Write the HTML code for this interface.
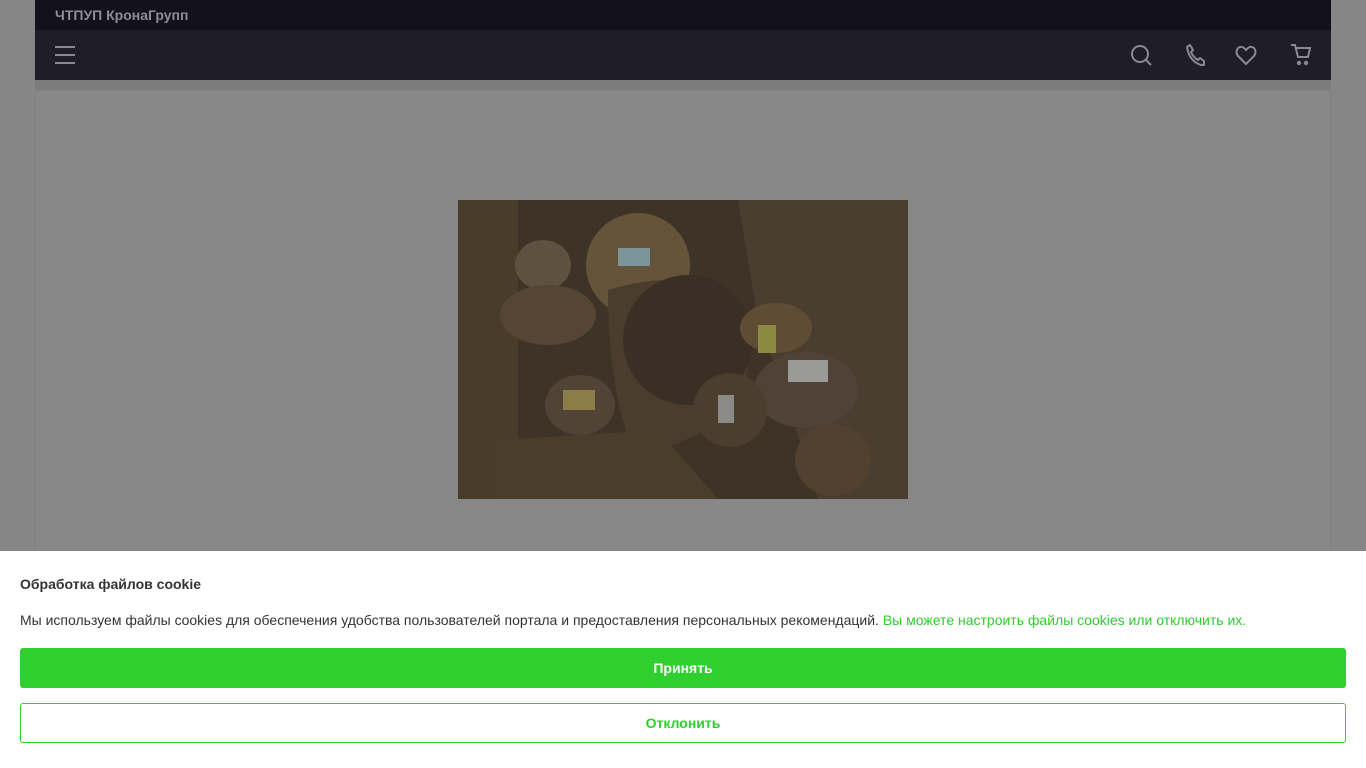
<!DOCTYPE html>
<html><head><meta charset="utf-8"><style>
*{margin:0;padding:0;box-sizing:border-box}
body{width:1366px;height:768px;overflow:hidden;background:#868686;font-family:"Liberation Sans",sans-serif;position:relative}
.top{position:absolute;left:35px;top:0;width:1296px;height:30px;background:#13111c;color:#8e8c94;font-weight:bold;font-size:14px;line-height:30px;padding-left:20px}
.nav{position:absolute;left:35px;top:30px;width:1296px;height:50px;background:#1f1d27}
.strip{position:absolute;left:35px;top:80px;width:1296px;height:10px;background:#7c7c7c}
.card{position:absolute;left:35px;top:90px;width:1296px;height:470px;background:#888;border:1px solid #7f7f7f}
.img{position:absolute;left:458px;top:200px;width:450px;height:299px}
.ck{position:absolute;left:0;top:551px;width:1366px;height:217px;background:#fff}
.ck h3{position:absolute;left:20px;top:25px;font-size:14px;color:#333;font-weight:bold}
.ck p{position:absolute;left:20px;top:61px;font-size:14px;color:#333}
.ck p a{color:#2ecc2e;text-decoration:none}
.b1{position:absolute;left:20px;top:97px;width:1326px;height:40px;background:#2ecf2e;border-radius:3px;color:#fff;font-weight:bold;font-size:14px;text-align:center;line-height:40px}
.b2{position:absolute;left:20px;top:152px;width:1326px;height:40px;border:1px solid #2ecf2e;border-radius:3px;color:#2ecf2e;font-weight:bold;font-size:14px;text-align:center;line-height:38px}
svg.i{position:absolute;fill:none;stroke:#8a8890;stroke-width:2}
</style></head><body>
<div class="top">ЧТПУП КронаГрупп</div>
<div class="nav">
<svg class="i" style="left:20px;top:15px" width="20" height="20"><path d="M0 2H20M0 10H20M0 18H20"/></svg>
<svg class="i" style="left:1095px;top:14px" width="24" height="24"><circle cx="10" cy="10" r="8"/><path d="M16 16L21 21"/></svg>
<svg class="i" style="left:1149px;top:14px" width="24" height="24" stroke-linejoin="round"><path d="M3 3L6 1L9 6L7 8Q9 13 14 16L16 14L20 17V21H17Q5 17 3 3Z"/></svg>
<svg class="i" style="left:1200px;top:14px" width="24" height="24"><path d="M11 20L3 12Q0 8 3 4Q7 1 11 6Q15 1 19 4Q22 8 19 12Z"/></svg>
<svg class="i" style="left:1255px;top:13px" width="24" height="26"><path d="M1 2H5L8 14H18L20 5H6"/><circle cx="9" cy="20" r="1.2" fill="#8a8890"/><circle cx="16" cy="20" r="1.2" fill="#8a8890"/></svg>
</div>
<div class="strip"></div>
<div class="card"></div>
<svg class="img" viewBox="0 0 450 299">
<rect width="450" height="299" fill="#3d3326"/>
<path d="M280 0H450V299H360Q330 200 300 120Z" fill="#4a3e30"/>
<rect x="0" y="0" width="60" height="299" fill="#4a3c2a"/>
<ellipse cx="180" cy="65" rx="52" ry="52" fill="#66543a"/>
<ellipse cx="85" cy="65" rx="28" ry="25" fill="#5e5140"/>
<ellipse cx="90" cy="115" rx="48" ry="30" fill="#554634"/>
<path d="M150 90Q250 60 290 120Q300 200 250 230L180 260Q150 200 150 90Z" fill="#4a3d2d"/>
<ellipse cx="230" cy="140" rx="65" ry="65" fill="#3a2f24"/>
<ellipse cx="318" cy="128" rx="36" ry="25" fill="#5e4c34"/>
<ellipse cx="348" cy="190" rx="52" ry="38" fill="#504236"/>
<ellipse cx="272" cy="210" rx="37" ry="37" fill="#4c3e2e"/>
<ellipse cx="375" cy="260" rx="38" ry="36" fill="#52412e"/>
<ellipse cx="122" cy="205" rx="35" ry="30" fill="#514437"/>
<path d="M40 240L200 230L260 299H40Z" fill="#4a3d2c"/>
<rect x="160" y="48" width="32" height="18" fill="#7a9498"/>
<rect x="300" y="125" width="18" height="28" fill="#8a8a40"/>
<rect x="330" y="160" width="40" height="22" fill="#9a9a98"/>
<rect x="260" y="195" width="16" height="28" fill="#8a8a88"/>
<rect x="105" y="190" width="32" height="20" fill="#8c7d48"/>
</svg>
<div class="ck">
<h3>Обработка файлов cookie</h3>
<p>Мы используем файлы cookies для обеспечения удобства пользователей портала и предоставления персональных рекомендаций. <a>Вы можете настроить файлы cookies или отключить их.</a></p>
<div class="b1">Принять</div>
<div class="b2">Отклонить</div>
</div>
</body></html>
